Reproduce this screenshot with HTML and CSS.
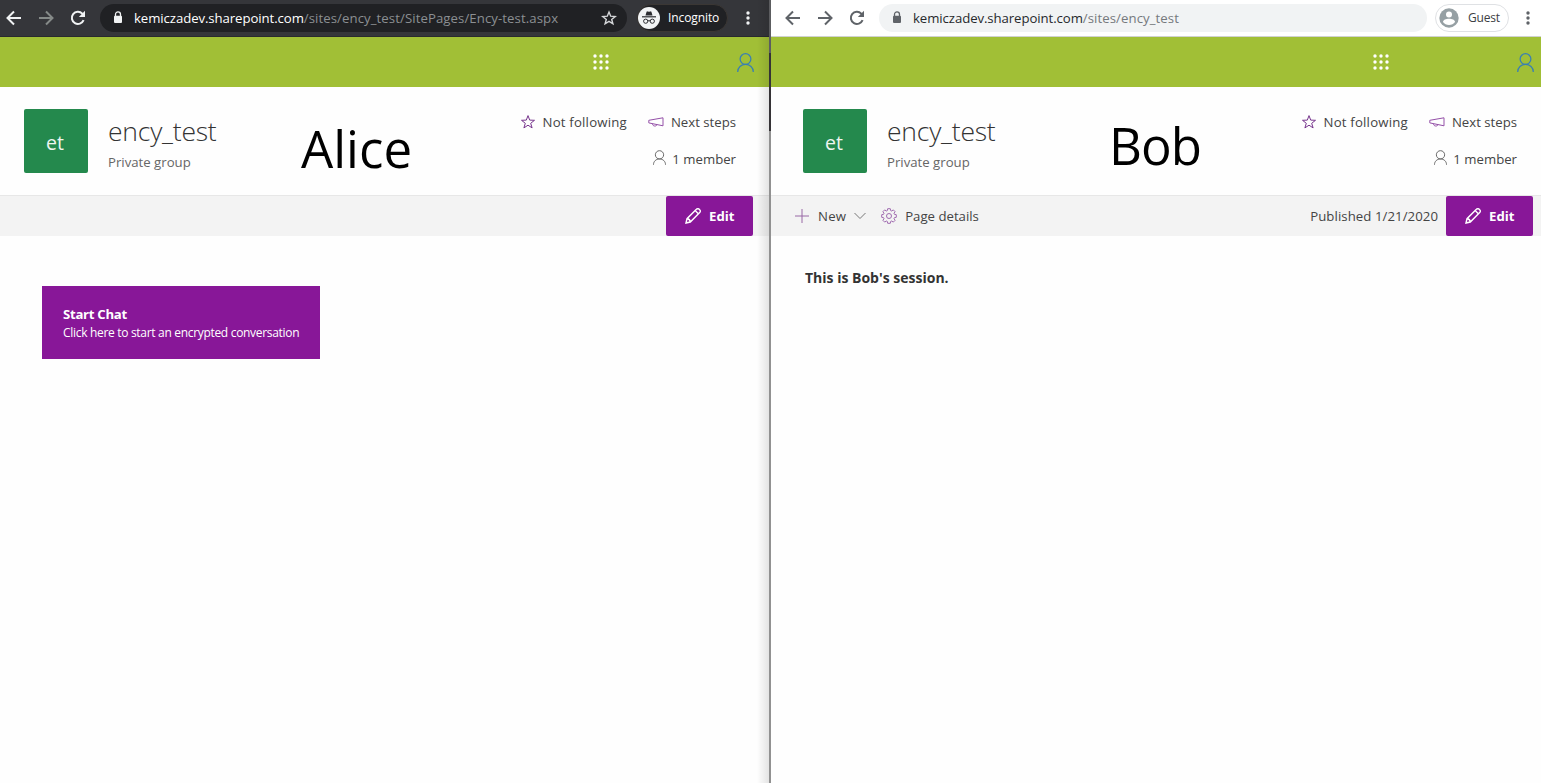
FILE: index.html
```html
<!DOCTYPE html>
<html lang="en">
<head>
<meta charset="utf-8">
<title>ency_test</title>
<link rel="stylesheet" href="styles.css">
</head>
<body>
<svg class="defs" aria-hidden="true">
  <symbol id="arrow" viewBox="0 0 16 16"><path d="M15 8H2M8 1.5 1.5 8 8 14.5" fill="none" stroke="currentColor" stroke-width="2"/></symbol>
  <symbol id="reload" viewBox="0 0 16 16"><path d="M13.6 10.2A6.1 6.1 0 1 1 12.3 3.6L14 5.3" fill="none" stroke="currentColor" stroke-width="2"/><path d="M15 .8V7H8.8z" fill="currentColor"/></symbol>
  <symbol id="lock" viewBox="0 0 10 13"><path d="M2.5 5.5V3.4a2.5 2.5 0 0 1 5 0v2.1" fill="none" stroke="currentColor" stroke-width="1.3"/><rect x="1" y="4.8" width="8" height="7.2" rx="1" fill="currentColor"/></symbol>
  <symbol id="star" viewBox="0 0 16 16"><path d="m8 1.6 1.7 4.5 4.8.2-3.8 3 1.4 4.6L8 11.2l-4.1 2.7 1.4-4.6-3.8-3 4.8-.2z" fill="none" stroke="currentColor"/></symbol>
  <symbol id="bookmark" viewBox="0 0 16 16"><path d="m8 2 1.7 4.200 4.500.3-3.500 2.900 1.200 4.400L8 11.400l-3.900 2.400 1.200-4.400-3.500-2.900 4.500-.3z" fill="none" stroke="currentColor" stroke-width="1.400"/></symbol>
  <symbol id="waffle" viewBox="0 0 16 16"><g fill="currentColor"><circle cx="2" cy="2" r="1.7"/><circle cx="8" cy="2" r="1.7"/><circle cx="14" cy="2" r="1.7"/><circle cx="2" cy="8" r="1.7"/><circle cx="8" cy="8" r="1.7"/><circle cx="14" cy="8" r="1.7"/><circle cx="2" cy="14" r="1.7"/><circle cx="8" cy="14" r="1.7"/><circle cx="14" cy="14" r="1.7"/></g></symbol>
  <symbol id="person" viewBox="0 0 16 18"><g fill="none" stroke="currentColor" stroke-width="1.200"><circle cx="8" cy="5.7" r="5.1"/><path d="M.6 17.9C.6 13.6 3.900 10.800 8 10.800s7.400 2.800 7.400 7.100"/></g></symbol>
  <symbol id="horn" viewBox="0 0 16 12"><path d="M.8 4.300 15 1.800v8L.8 6.900zM4.500 7.800c0 2.600 3.800 3 4.400.9" fill="none" stroke="currentColor"/></symbol>
  <symbol id="pencil" viewBox="0 0 16 16"><path d="m1 15 1-4.300L11.400 1.300a2 2 0 0 1 2.900 0l.4.4a2 2 0 0 1 0 2.900L5.300 14zM10.200 2.600l3.300 3.300M2 10.800c1.800.1 3.100 1.300 3.200 3.200" fill="none" stroke="currentColor" stroke-width="1.400"/></symbol>
  <symbol id="dots" viewBox="0 0 4 14"><g fill="currentColor"><circle cx="2" cy="2" r="1.7"/><circle cx="2" cy="7" r="1.7"/><circle cx="2" cy="12" r="1.7"/></g></symbol>
  <symbol id="plus" viewBox="0 0 14 14"><path d="M7 0v14M0 7h14" fill="none" stroke="currentColor"/></symbol>
  <symbol id="chevron" viewBox="0 0 12 8"><path d="m.5 1 5.500 5.500L11.500 1" fill="none" stroke="currentColor"/></symbol>
  <symbol id="gear" viewBox="0 0 16 16"><g fill="none" stroke="currentColor"><path d="M6.700.7h2.600l.4 1.900 1 .4 1.600-1.100 1.800 1.800L13 5.300l.4 1 1.900.4v2.600l-1.900.4-.4 1 1.100 1.600-1.800 1.800-1.600-1.100-1 .4-.4 1.900H6.700l-.4-1.900-1-.4-1.600 1.100-1.800-1.800L3 10.700l-.4-1L.7 9.300V6.700l1.900-.4.4-1-1.100-1.600 1.800-1.800L5.300 3l1-.4z"/><circle cx="8" cy="8" r="2.500"/></g></symbol>
</svg>
<div class="screen">
  <section class="pane alice">
    <div class="browser dark">
      <svg class="nav"><use href="#arrow"/></svg>
      <svg class="nav forward dim"><use href="#arrow"/></svg>
      <svg class="nav"><use href="#reload"/></svg>
      <div class="address">
        <svg class="lock"><use href="#lock"/></svg>
        <span class="host">kemiczadev.sharepoint.com</span><span class="path">/sites/ency_test/SitePages/Ency-test.aspx</span>
        <svg class="bookmark"><use href="#bookmark"/></svg>
      </div>
      <div class="profile">
        <svg class="face" viewBox="0 0 22 22"><circle cx="11" cy="11" r="11" fill="#f1f3f4"/><path d="M7.500 8.600 8.600 4.800q.2-.6.900-.4l1.500.4 1.500-.4q.7-.2.900.4l1.100 3.800z" fill="#2b2c30"/><path d="M4 9.800h14" stroke="#2b2c30" stroke-width="1.200"/><g fill="none" stroke="#2b2c30"><circle cx="7.700" cy="14.200" r="2.100"/><circle cx="14.300" cy="14.200" r="2.100"/><path d="M9.800 14q1.200-.8 2.400 0"/></g></svg>
        <span>Incognito</span>
      </div>
      <svg class="dots"><use href="#dots"/></svg>
    </div>
    <div class="suite"><svg class="waffle"><use href="#waffle"/></svg><svg class="account"><use href="#person"/></svg></div>
    <header class="site">
      <div class="logo">et</div>
      <div class="titles"><h1>ency_test</h1><p>Private group</p></div>
      <div class="actions">
        <div class="links"><svg class="star"><use href="#star"/></svg><span class="follow">Not following</span><svg class="horn"><use href="#horn"/></svg><span class="steps">Next steps</span></div>
        <div class="members"><svg class="person"><use href="#person"/></svg><span class="count">1 member</span></div>
      </div>
      <div class="caption">Alice</div>
    </header>
    <div class="commands"><button class="edit"><svg><use href="#pencil"/></svg><span>Edit</span></button></div>
    <main><button class="chat"><b>Start Chat</b><span>Click here to start an encrypted conversation</span></button></main>
    <div class="edge"></div>
  </section>
  <section class="pane bob">
    <div class="browser light">
      <svg class="nav"><use href="#arrow"/></svg>
      <svg class="nav forward"><use href="#arrow"/></svg>
      <svg class="nav"><use href="#reload"/></svg>
      <div class="address">
        <svg class="lock"><use href="#lock"/></svg>
        <span class="host">kemiczadev.sharepoint.com</span><span class="path">/sites/ency_test</span>
      </div>
      <div class="profile">
        <svg class="face" viewBox="0 0 20 20"><circle cx="10" cy="10" r="9.700" fill="#96a0a4"/><circle cx="10" cy="6.500" r="3" fill="#fff"/><path d="M4 14c0-4.500 12-4.500 12 0q-2.100 3-6 3t-6-3z" fill="#fff"/></svg>
        <span>Guest</span>
      </div>
      <svg class="dots"><use href="#dots"/></svg>
    </div>
    <div class="suite"><svg class="waffle"><use href="#waffle"/></svg><svg class="account"><use href="#person"/></svg></div>
    <header class="site">
      <div class="logo">et</div>
      <div class="titles"><h1>ency_test</h1><p>Private group</p></div>
      <div class="actions">
        <div class="links"><svg class="star"><use href="#star"/></svg><span class="follow">Not following</span><svg class="horn"><use href="#horn"/></svg><span class="steps">Next steps</span></div>
        <div class="members"><svg class="person"><use href="#person"/></svg><span class="count">1 member</span></div>
      </div>
      <div class="caption">Bob</div>
    </header>
    <div class="commands">
      <svg class="plus"><use href="#plus"/></svg><span class="new">New</span><svg class="chevron"><use href="#chevron"/></svg>
      <svg class="gear"><use href="#gear"/></svg><span class="details">Page details</span>
      <span class="published">Published 1/21/2020</span>
      <button class="edit"><svg><use href="#pencil"/></svg><span>Edit</span></button>
    </div>
    <main><p class="session">This is Bob's session.</p></main>
  </section>
</div>
</body>
</html>
```
FILE: styles.css
```css
* { box-sizing: border-box; }
body { margin: 0; background: #fefefe; font: 13.2px/20px "Open Sans", "Noto Sans", sans-serif; color: #444; }
h1, p { margin: 0; }
svg { display: block; flex: none; }
span, b { white-space: nowrap; }
button { border: 0; padding: 0; margin: 0; font: inherit; color: #fff; background: #881798; }
.defs { position: absolute; width: 0; height: 0; }
.screen { display: flex; width: 1541px; height: 783px; overflow: hidden; }
.pane { position: relative; display: flex; flex-direction: column; }
.alice { --left: 0px; --right: 8px; width: 771px; padding-right: 2px; }
.bob { --left: 8px; --right: 0px; width: 770px; }

.browser { display: flex; align-items: center; height: 37px; padding: 0 calc(var(--right) + 11px) 1px calc(var(--left) + 6px); }
.dark { background: #35363a; border-bottom: 1px solid #292a2d; color: #f1f3f4; }
.light { background: #fff; border-bottom: 1px solid #d0d2d0; color: #5f6368; }
.nav { width: 16px; height: 16px; margin-right: 16px; }
.forward { transform: scaleX(-1); }
.dim { color: #858a88; }
.address { display: flex; align-items: center; flex: 1; height: 28px; margin-left: -2px; padding: 0 10px 0 13px; border-radius: 14px; }
.dark .address { background: #202124; }
.light .address { background: #f1f3f4; }
.lock { width: 10px; height: 13px; margin-right: 11px; }
.host { letter-spacing: -.08px; }
.dark .host { color: #fff; }
.light .host { color: #27292c; }
.path { color: #75797d; letter-spacing: .08px; }
.dark .path { color: #8b8f92; }
.bookmark { width: 16px; height: 16px; margin-left: auto; color: #d5d7da; }
.profile { display: flex; align-items: center; height: 28px; border-radius: 14px; font-size: 12px; }
.dark .profile { width: 91px; margin: 0 18px 0 10px; background: #202124; border: 1px solid #3b3734; color: #fff; letter-spacing: -.1px; }
.light .profile { width: 74px; margin: 0 17px 0 8px; border: 1px solid #dfe1e4; color: #3c4043; letter-spacing: -.2px; }
.dark .face { width: 22px; height: 22px; margin-right: 8px; }
.light .face { width: 20px; height: 20px; margin: 0 9px 0 3px; }
.dots { width: 4px; height: 14px; }

.suite { display: flex; align-items: center; justify-content: flex-end; height: 50px; padding-right: calc(var(--right) + 7px); background: #a1bf36; }
.waffle { width: 16px; height: 16px; margin: -1px 128px 0 0; color: #fff; }
.account { width: 17px; height: 19px; margin-top: 1px; color: #397fb3; }

.site { position: relative; display: flex; height: 108px; padding: 22px calc(var(--right) + 24px) 0 calc(var(--left) + 24px); }
.logo { width: 64px; height: 64px; padding-right: 2px; border-radius: 2px; background: #24894d; color: #eef5ef; font-size: 19.5px; line-height: 68px; text-align: center; }
.titles { margin-left: 20px; }
h1 { margin-top: 3px; font-size: 26.5px; font-weight: 300; line-height: 38px; letter-spacing: -.22px; color: #333; }
.titles p { margin-top: 2px; color: #666; }
.actions { display: flex; flex-direction: column; align-items: flex-end; gap: 17px; margin: 3px 1px 0 auto; }
.bob .actions { margin-right: 0; }
.links, .members { display: flex; align-items: center; height: 20px; }
.star { width: 16px; height: 16px; margin-right: 7px; color: #77358d; }
.follow { letter-spacing: .2px; }
.horn { width: 16px; height: 12px; margin: 0 7px 0 21px; color: #9450a8; }
.person { width: 13px; height: 15px; margin: -4px 6px 0 0; color: #666; }
.caption { position: absolute; font-size: 51px; line-height: 70px; color: #000; }
.alice .caption { left: 301px; top: 26px; }
.bob .caption { left: 338px; top: 23px; letter-spacing: -1px; }

.commands { display: flex; align-items: center; height: 41px; padding: 0 calc(var(--right) + 8px) 0 calc(var(--left) + 16px); border-top: 1px solid #e7e7e7; background: #f3f3f3; }
.edit { display: flex; align-items: center; width: 87px; height: 40px; margin-left: auto; padding-left: 19px; border-radius: 2px; font-weight: 700; }
.edit svg { width: 16px; height: 16px; margin-right: 8px; }
.plus { width: 14px; height: 14px; margin-right: 9px; color: #9869a5; }
.new { letter-spacing: .2px; }
.chevron { width: 12px; height: 8px; margin: 0 15px 0 8px; color: #777; }
.gear { width: 16px; height: 16px; margin-right: 8px; color: #a06bb0; }
.published { margin-left: auto; letter-spacing: .07px; }
.published + .edit { margin-left: 8px; }

.chat { display: flex; flex-direction: column; width: 278px; height: 73px; margin: 50px 0 0 42px; padding: 19px 0 0 21px; text-align: left; line-height: 19px; }
.chat b { font-size: 13.2px; line-height: 18px; letter-spacing: -.3px; }
.chat span { font-size: 12px; letter-spacing: -.31px; }
.session { margin: 32px 0 0 34px; font-size: 14px; font-weight: 700; color: #333; }
.edge { position: absolute; inset: 0 0 0 auto; width: 14px; background: linear-gradient(#5c5d60 0 53px, #353336 53px 131px, #919191 131px) right / 2px 100% no-repeat, linear-gradient(90deg, transparent, rgba(0, 0, 0, .12)); }
```
